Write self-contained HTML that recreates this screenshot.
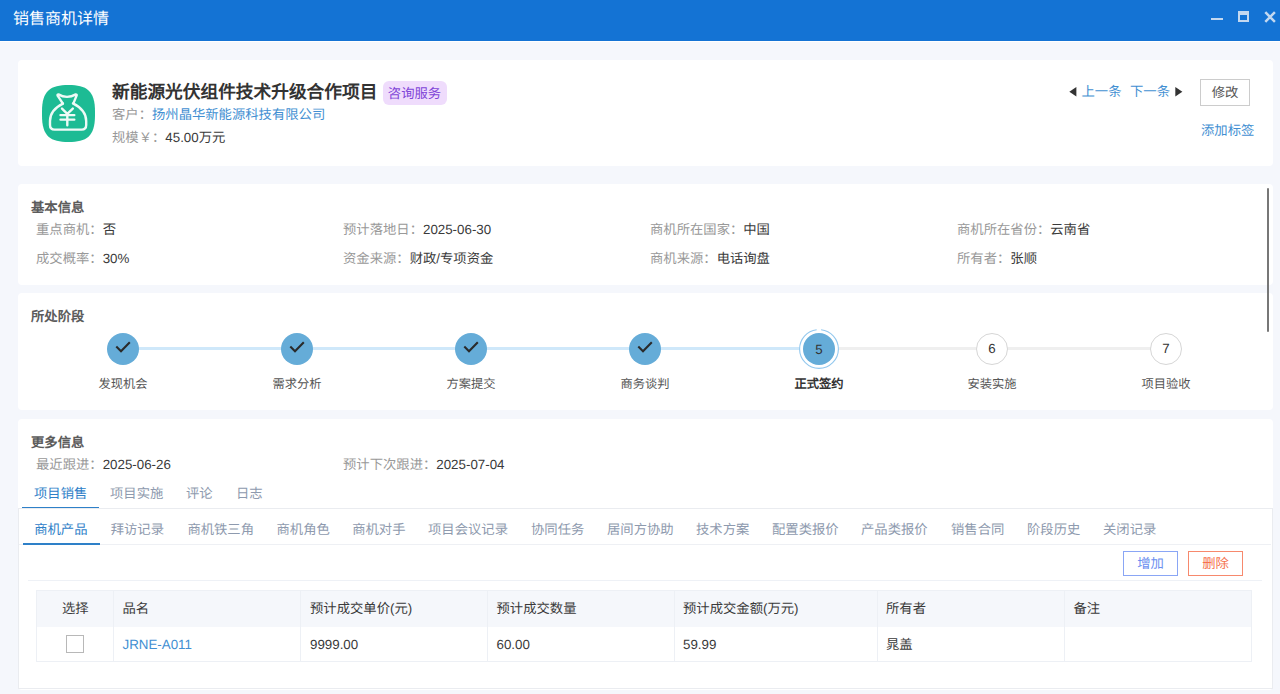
<!DOCTYPE html>
<html lang="zh-CN"><head><meta charset="utf-8">
<style>
*{margin:0;padding:0;box-sizing:border-box}
html,body{text-rendering:geometricPrecision;width:1280px;height:694px;overflow:hidden;background:#f5f7fc;font-family:"Liberation Sans",sans-serif;color:#3a3a3a;font-size:13.333px}
.a{position:absolute;white-space:nowrap}
#bar{position:absolute;left:0;top:0;width:1280px;height:40.5px;background:#1473d4}
.card{position:absolute;left:17.5px;width:1255px;background:#fff;border-radius:4px}
.g{color:#999}
.sec{position:absolute;font-weight:bold;color:#5c5c5c;line-height:20px;white-space:nowrap}
.f{position:absolute;line-height:20px;white-space:nowrap}
.step{position:absolute;width:32px;height:32px;border-radius:50%;top:333.2px;text-align:center}
.done{background:#65acd8}
.todo{background:#fff;border:1px solid #d6d6d6;line-height:30px;color:#333}
.sl{position:absolute;top:374px;line-height:20px;font-size:12.25px;color:#555;width:120px;text-align:center;white-space:nowrap}
.tab{position:absolute;line-height:20px;color:#8e9aae;white-space:nowrap}
.on{color:#2e80c8}
.th{position:absolute;top:599.3px;line-height:20px;color:#3a3a3a;white-space:nowrap}
.td{position:absolute;top:634.8px;line-height:20px;color:#3a3a3a;white-space:nowrap}
.vl{position:absolute;width:1px;background:#edf0f5}
</style></head><body>
<div class="a" style="left:0;top:40px;width:1280px;height:2px;background:#fff"></div><div id="bar"></div>
<div class="a" style="left:13px;top:10px;font-size:16px;line-height:20px;color:#fff">销售商机详情</div>
<div class="a" style="left:1211px;top:17.5px;width:11.7px;height:2.5px;background:#c3d8f0"></div>
<div class="a" style="left:1238px;top:11px;width:11px;height:11px;border:2px solid #c3d8f0;border-top-width:4px"></div>
<svg class="a" style="left:1263px;top:10px" width="14" height="14" viewBox="0 0 14 14"><path d="M2.3 2.2L11.9 11.8M11.9 2.2L2.3 11.8" stroke="#c3d8f0" stroke-width="2.5"/></svg>

<!-- card 1 -->
<div class="card" style="top:60px;height:106px"></div>
<svg class="a" style="left:42px;top:85px" width="53" height="57" viewBox="0 0 53 57">
<path d="M26.5 0C44.5 0 53 5.5 53 26.5V30.5C53 51.5 44.5 57 26.5 57C8.5 57 0 51.5 0 30.5V26.5C0 5.5 8.5 0 26.5 0Z" fill="#1dbb94"/>
<g fill="none" stroke="#eefaf6" stroke-width="2.4" stroke-linejoin="round" stroke-linecap="round">
<path d="M20.9 18.6L15.6 10.6Q15.2 9.4 16.4 9.4Q20.5 11.8 25 11.9Q29.5 11.8 33.8 9.4Q35 9.4 34.6 10.6L31.4 18.4"/>
<path d="M20.9 18.6C13 22.5 8 29 8 36V40Q8 44.6 12.6 44.6H39.6Q44.2 44.6 44.2 40V36C44.2 29 39 22.5 31 18.4"/>
<path d="M20 23.6L25.3 28.8L30.8 23.6M18.5 30.1H32.3M18.5 34.6H32.3M25.3 28.8V40.3"/>
</g>
</svg>
<div class="a" style="left:112px;top:80px;font-size:17.7px;font-weight:bold;line-height:24px;color:#333">新能源光伏组件技术升级合作项目</div>
<div class="a" style="left:382.5px;top:81px;width:64px;height:24px;background:#efdcfc;border-radius:6px;color:#7f45d8;line-height:25px;text-align:center">咨询服务</div>
<div class="f" style="left:112px;top:105.2px"><span class="g">客户：</span><span style="color:#428fd2">扬州晶华新能源科技有限公司</span></div>
<div class="f" style="left:112px;top:128px"><span class="g">规模￥：</span>45.00万元</div>
<svg class="a" style="left:1069px;top:86.8px" width="8" height="10" viewBox="0 0 8 10"><path d="M7.4 0V9.6L0.3 4.8Z" fill="#333"/></svg>
<div class="f" style="left:1081.5px;top:82.2px;color:#428fd2">上一条</div>
<div class="f" style="left:1130px;top:82.2px;color:#428fd2">下一条</div>
<svg class="a" style="left:1174.5px;top:86.8px" width="8" height="10" viewBox="0 0 8 10"><path d="M0.3 0V9.6L7.4 4.8Z" fill="#333"/></svg>
<div class="a" style="left:1200px;top:79px;width:50px;height:27px;border:1px solid #ccc;line-height:26px;text-align:center;color:#555">修改</div>
<div class="f" style="left:1201px;top:121px;color:#428fd2">添加标签</div>

<!-- card 2 -->
<div class="card" style="top:184px;height:101px"></div>
<div class="sec" style="left:31px;top:198px">基本信息</div>
<div class="f" style="left:36px;top:220px"><span class="g">重点商机：</span>否</div>
<div class="f" style="left:343px;top:220px"><span class="g">预计落地日：</span>2025-06-30</div>
<div class="f" style="left:650px;top:220px"><span class="g">商机所在国家：</span>中国</div>
<div class="f" style="left:957px;top:220px"><span class="g">商机所在省份：</span>云南省</div>
<div class="f" style="left:36px;top:249px"><span class="g">成交概率：</span>30%</div>
<div class="f" style="left:343px;top:249px"><span class="g">资金来源：</span>财政/专项资金</div>
<div class="f" style="left:650px;top:249px"><span class="g">商机来源：</span>电话询盘</div>
<div class="f" style="left:957px;top:249px"><span class="g">所有者：</span>张顺</div>

<!-- card 3 -->
<div class="card" style="top:293px;height:117px"></div>
<div class="sec" style="left:31px;top:306.8px">所处阶段</div>
<div class="a" style="left:123px;top:347px;width:696px;height:3px;background:#cfe8fa"></div>
<div class="a" style="left:819px;top:347px;width:348px;height:3px;background:#efefef"></div>
<div class="step done" style="left:107px"><svg width="32" height="32"><path d="M9.3 13.6L14 18.2L22.8 9.3" stroke="#2a2a2a" stroke-width="2.1" fill="none"/></svg></div>
<div class="step done" style="left:281px"><svg width="32" height="32"><path d="M9.3 13.6L14 18.2L22.8 9.3" stroke="#2a2a2a" stroke-width="2.1" fill="none"/></svg></div>
<div class="step done" style="left:455px"><svg width="32" height="32"><path d="M9.3 13.6L14 18.2L22.8 9.3" stroke="#2a2a2a" stroke-width="2.1" fill="none"/></svg></div>
<div class="step done" style="left:629px"><svg width="32" height="32"><path d="M9.3 13.6L14 18.2L22.8 9.3" stroke="#2a2a2a" stroke-width="2.1" fill="none"/></svg></div>
<svg class="a" style="left:799px;top:328.8px" width="40" height="40"><circle cx="20" cy="20" r="19.4" fill="#fff" stroke="#93c8ee" stroke-width="1.1" stroke-dasharray="88.4 4.6 200"/></svg>
<div class="step done" style="left:803px;line-height:34px;color:#333">5</div>
<div class="step todo" style="left:976px">6</div>
<div class="step todo" style="left:1150px">7</div>
<div class="sl" style="left:63px">发现机会</div>
<div class="sl" style="left:237px">需求分析</div>
<div class="sl" style="left:411px">方案提交</div>
<div class="sl" style="left:585px">商务谈判</div>
<div class="sl" style="left:759px;font-weight:bold;color:#333">正式签约</div>
<div class="sl" style="left:932px">安装实施</div>
<div class="sl" style="left:1106px">项目验收</div>

<!-- card 4 -->
<div class="card" style="top:419px;height:271px"></div>
<div class="sec" style="left:31px;top:432.8px">更多信息</div>
<div class="f" style="left:36px;top:455.3px"><span class="g">最近跟进：</span>2025-06-26</div>
<div class="f" style="left:343px;top:455.3px"><span class="g">预计下次跟进：</span>2025-07-04</div>

<div class="tab on" style="left:34px;top:483.6px">项目销售</div>
<div class="tab" style="left:110px;top:483.6px">项目实施</div>
<div class="tab" style="left:186px;top:483.6px">评论</div>
<div class="tab" style="left:236px;top:483.6px">日志</div>
<div class="a" style="left:22px;top:507px;width:77px;height:2px;background:#2e80c8"></div>

<div class="a" style="left:18px;top:508px;width:1255px;height:181px;border:1px solid #eaecf0"></div>
<div class="a" style="left:19px;top:544px;width:1252px;height:1px;background:#eef0f4"></div>
<div class="tab on" style="left:34.2px;top:519.5px">商机产品</div>
<div class="tab" style="left:110.7px;top:519.5px">拜访记录</div>
<div class="tab" style="left:187.4px;top:519.5px">商机铁三角</div>
<div class="tab" style="left:276.5px;top:519.5px">商机角色</div>
<div class="tab" style="left:352.2px;top:519.5px">商机对手</div>
<div class="tab" style="left:428px;top:519.5px">项目会议记录</div>
<div class="tab" style="left:531px;top:519.5px">协同任务</div>
<div class="tab" style="left:607px;top:519.5px">居间方协助</div>
<div class="tab" style="left:696px;top:519.5px">技术方案</div>
<div class="tab" style="left:772px;top:519.5px">配置类报价</div>
<div class="tab" style="left:861px;top:519.5px">产品类报价</div>
<div class="tab" style="left:951px;top:519.5px">销售合同</div>
<div class="tab" style="left:1027px;top:519.5px">阶段历史</div>
<div class="tab" style="left:1103px;top:519.5px">关闭记录</div>
<div class="a" style="left:22.5px;top:543px;width:77px;height:2px;background:#2e80c8"></div>

<div class="a" style="left:1123px;top:551px;width:55px;height:25px;border:1px solid #8aa6f5;color:#6b8ff0;line-height:23px;text-align:center">增加</div>
<div class="a" style="left:1188px;top:551px;width:55px;height:25px;border:1px solid #f7896d;color:#f5714d;line-height:23px;text-align:center">删除</div>
<div class="a" style="left:28px;top:580px;width:1234px;height:1px;background:#eef1f6"></div>

<div class="a" style="left:36px;top:590px;width:1216px;height:72px;border:1px solid #edf0f5;background:#fff"></div><div class="a" style="left:37px;top:591px;width:1214px;height:36px;background:#f5f7fb"></div>

<div class="vl" style="left:113px;top:590px;height:72px"></div>
<div class="vl" style="left:300px;top:590px;height:72px"></div>
<div class="vl" style="left:487px;top:590px;height:72px"></div>
<div class="vl" style="left:674px;top:590px;height:72px"></div>
<div class="vl" style="left:877px;top:590px;height:72px"></div>
<div class="vl" style="left:1064px;top:590px;height:72px"></div>
<div class="th" style="left:62px">选择</div>
<div class="th" style="left:122.5px">品名</div>
<div class="th" style="left:310px">预计成交单价(元)</div>
<div class="th" style="left:496.5px">预计成交数量</div>
<div class="th" style="left:683px">预计成交金额(万元)</div>
<div class="th" style="left:886px">所有者</div>
<div class="th" style="left:1073.5px">备注</div>
<div class="a" style="left:66px;top:635px;width:18px;height:18px;border:1px solid #b8b8b8;background:#fff"></div>
<div class="td" style="left:122.5px;color:#428fd2">JRNE-A011</div>
<div class="td" style="left:310px">9999.00</div>
<div class="td" style="left:496.5px">60.00</div>
<div class="td" style="left:683px">59.99</div>
<div class="td" style="left:886px">晁盖</div>
<div class="a" style="left:1267px;top:188px;width:2px;height:144px;background:#777;border-radius:1px"></div>
</body></html>
